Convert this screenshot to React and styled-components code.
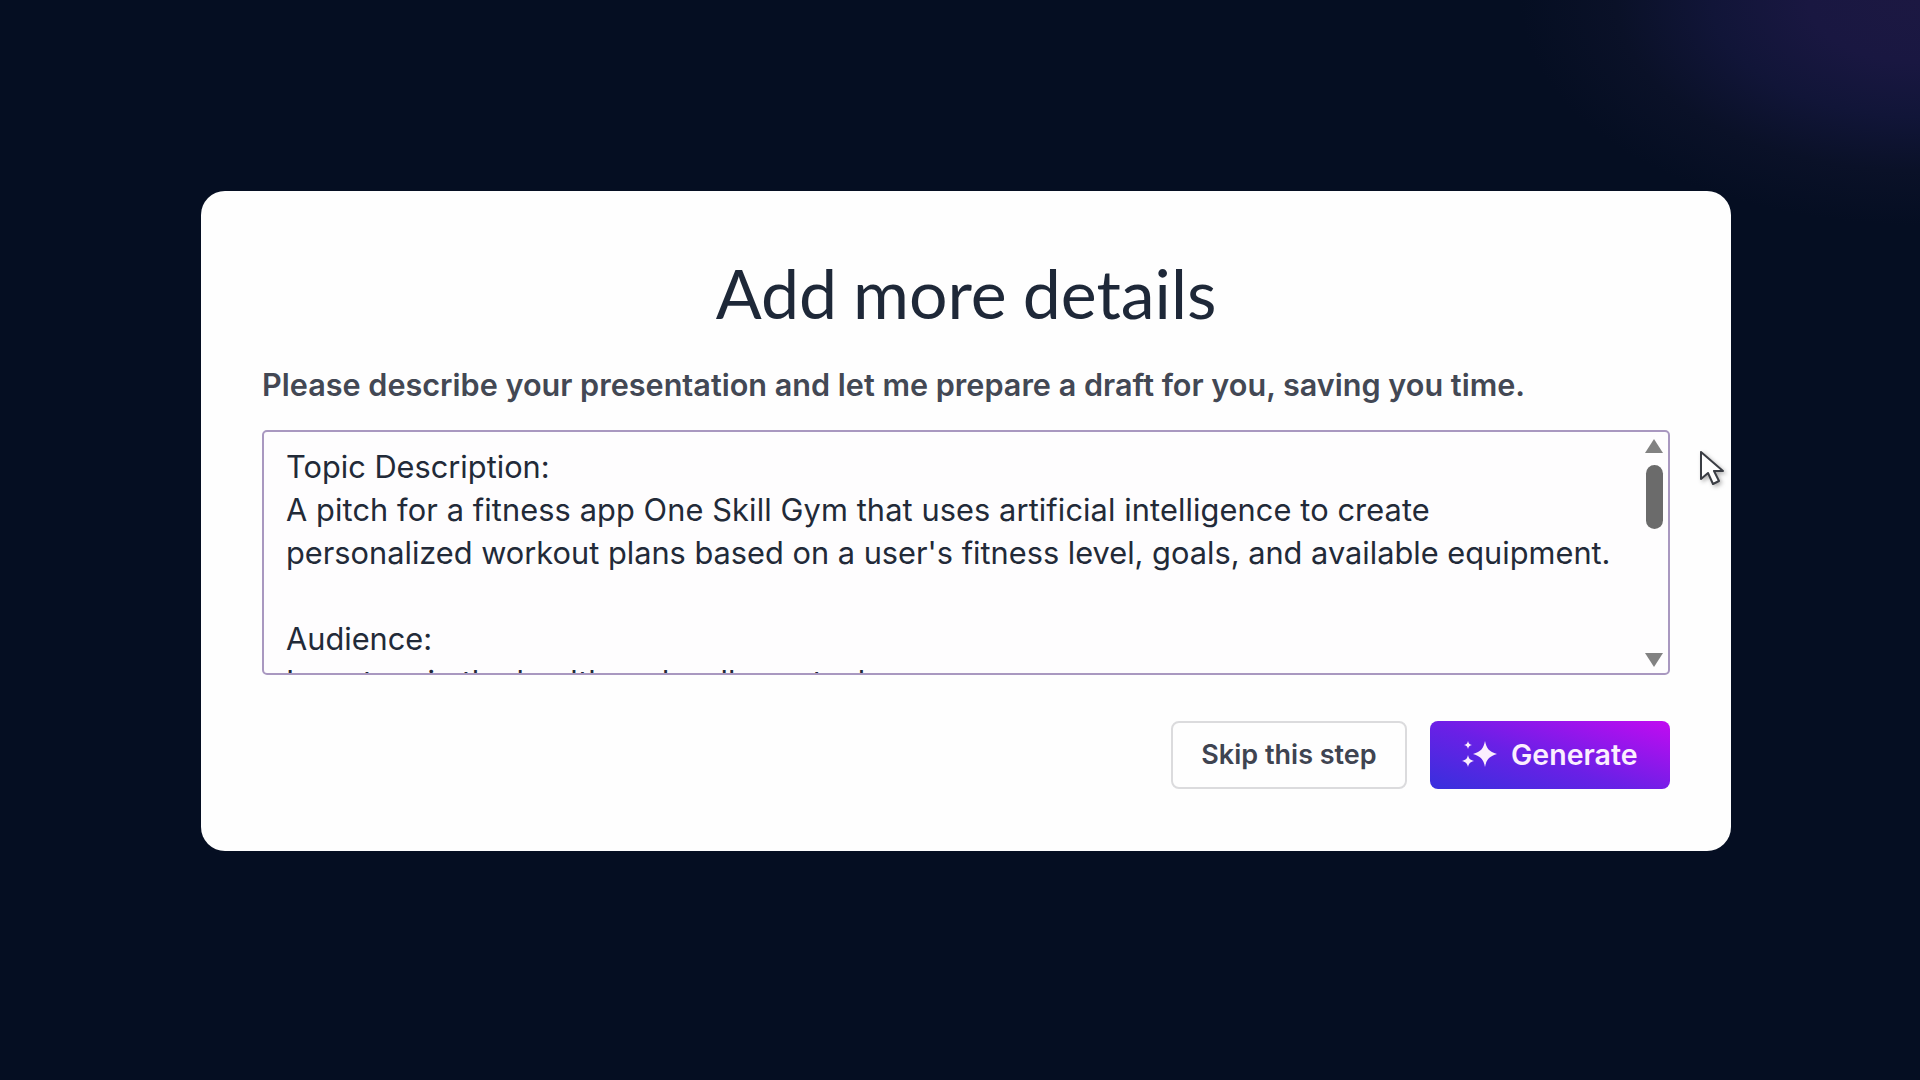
import styled, { createGlobalStyle } from "styled-components";

const Global = createGlobalStyle`
  * { box-sizing: border-box; }
  html, body { margin: 0; padding: 0; }
  body { background: #050e22; font-family: "Inter", "Liberation Sans", sans-serif; }
`;

const Page = styled.div`
  width: 1920px;
  height: 1080px;
  overflow: hidden;
  padding: 191px 0 0 201px;
  background:
    radial-gradient(ellipse 400px 225px at 100% 0%, #1c1842 0%, #191741 28%, #111538 52%, #0a1128 76%, rgba(5, 14, 34, 0) 100%),
    #050e22;
`;

const Modal = styled.div`
  position: relative;
  width: 1530px;
  height: 660px;
  padding: 0 61px;
  background: #fefefe;
  border-radius: 24px;
`;

const Title = styled.h1`
  margin: 0;
  padding-top: 60px;
  height: 170px;
  font-family: "Lato", sans-serif;
  font-size: 68px;
  line-height: 84px;
  font-weight: 400;
  word-spacing: -1.5px;
  text-align: center;
  color: #1e2838;
`;

const Lead = styled.p`
  margin: 0;
  height: 69px;
  padding-top: 4px;
  font-size: 30.6px;
  line-height: 40px;
  font-weight: 600;
  color: #434854;
  white-space: nowrap;
`;

const Field = styled.div`
  position: relative;
  height: 245px;
  padding: 13px 40px 0 22px;
  overflow: hidden;
  border: 2px solid #a998c0;
  border-radius: 5px;
  background: #fefdfe;
`;

const FieldText = styled.div`
  font-size: 30.75px;
  line-height: 43px;
  color: #222a38;
  white-space: pre-wrap;
`;

const WideLine = styled.span`
  letter-spacing: 0.1px;
`;

const Scrollbar = styled.div`
  position: absolute;
  top: 7px;
  right: 5px;
  bottom: 6px;
  width: 18px;
  display: flex;
  flex-direction: column;
  align-items: center;
`;

const Arrow = styled.svg`
  display: block;
  width: 18px;
  height: 14px;
  fill: #828282;
  margin-top: ${(p) => (p.$down ? "auto" : "0")};
`;

const Thumb = styled.div`
  width: 17px;
  height: 64px;
  margin-top: 12px;
  border-radius: 9px;
  background: #6b6b6b;
`;

const Actions = styled.div`
  display: flex;
  justify-content: flex-end;
  gap: 23px;
  margin-top: 46px;
`;

const SkipButton = styled.button`
  width: 236px;
  height: 68px;
  padding: 0 0 2px;
  border: 2px solid #dbdbdd;
  border-radius: 8px;
  background: #fefefe;
  font-family: inherit;
  font-size: 27px;
  font-weight: 600;
  color: #3f4451;
`;

const GenerateButton = styled.button`
  display: flex;
  align-items: center;
  width: 240px;
  height: 68px;
  padding: 0 0 2px 32px;
  gap: 13px;
  border: 0;
  border-radius: 8px;
  background: linear-gradient(18deg, #3730dd 0%, #6a20e6 45%, #c20bf1 100%);
  font-family: inherit;
  font-size: 28.5px;
  font-weight: 600;
  color: #fbeefe;
`;

const Pointer = styled.svg`
  position: absolute;
  left: 1498px;
  top: 259px;
  width: 28px;
  height: 38px;
  filter: drop-shadow(2px 2px 2px rgba(0, 0, 0, 0.3));
`;

const Sparkles = () => (
  <svg width="36" height="30" viewBox="0 0 36 30" fill="#fbeefe">
    <path d="M23 2c1.500 7.500 4 10.500 12 13-8 2.500-10.500 5.500-12 13-1.500-7.500-4-10.500-12-13 8-2.500 10.500-5.500 12-13z" />
    <path d="M6 2c.5 2.500 1.500 3.500 4 4-2.500.5-3.500 1.500-4 4-.5-2.500-1.500-3.500-4-4 2.500-.5 3.500-1.500 4-4z" />
    <path d="M6 16c.8 3.400 2 5 6 6-4 1-5.200 2.600-6 6-.8-3.400-2-5-6-6 4-1 5.200-2.600 6-6z" />
  </svg>
);

export default function App() {
  return (
    <Page>
      <Global />
      <Modal>
        <Title>Add more details</Title>
        <Lead>Please describe your presentation and let me prepare a draft for you, saving you time.</Lead>
        <Field>
          <FieldText>
            {"Topic Description:\n"}
            <WideLine>A pitch for a fitness app One Skill Gym that uses artificial intelligence to create</WideLine>
            {"\npersonalized workout plans based on a user's fitness level, goals, and available equipment.\n\nAudience:\nInvestors in the health and wellness tech"}
          </FieldText>
          <Scrollbar>
            <Arrow viewBox="0 0 18 14">
              <path d="M9 0l9 14H0z" />
            </Arrow>
            <Thumb />
            <Arrow $down viewBox="0 0 18 14">
              <path d="M0 0h18L9 14z" />
            </Arrow>
          </Scrollbar>
        </Field>
        <Actions>
          <SkipButton>Skip this step</SkipButton>
          <GenerateButton>
            <Sparkles />
            Generate
          </GenerateButton>
        </Actions>
        <Pointer viewBox="0 0 28 38">
          <path d="M2 2v27l7-6 5 11 6-3-5-10h9z" fill="#fefefe" stroke="#3a3d44" strokeWidth="2" strokeLinejoin="round" />
        </Pointer>
      </Modal>
    </Page>
  );
}
